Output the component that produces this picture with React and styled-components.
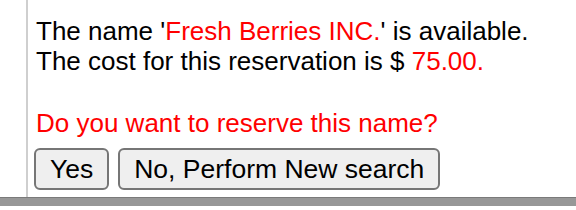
import styled, { createGlobalStyle } from "styled-components";

const Global = createGlobalStyle`
  html, body {
    margin: 0;
    padding: 0;
    background: #fff;
  }
  body {
    font-family: "Liberation Sans", Arial, sans-serif;
  }
`;

const Page = styled.div`
  width: 576px;
  height: 210px;
  display: flex;
  flex-direction: column;
  overflow: hidden;
`;

const Body = styled.div`
  height: 197px;
  display: flex;
`;

const Gutter = styled.div`
  width: 26px;
  flex-shrink: 0;
`;

const Panel = styled.div`
  flex: 1;
  border-left: 2px solid #cfcfcf;
  padding: 16px 0 0 8px;
`;

const Line = styled.div`
  font-size: 26px;
  line-height: 30px;
  color: #000;
`;

const Red = styled.span`
  color: #ff0000;
`;

const Question = styled.div`
  font-size: 26px;
  line-height: 30px;
  color: #ff0000;
  margin-top: 32px;
`;

const Buttons = styled.div`
  display: flex;
  gap: 9px;
  margin: 10px 0 0 -2px;
`;

const Button = styled.button`
  font-family: "Liberation Sans", Arial, sans-serif;
  font-size: 26.5px;
  height: 42px;
  padding: 0 14px;
  background: #efefef;
  border: 2px solid #767676;
  border-radius: 6px;
  color: #000;
`;

const Bar = styled.div`
  height: 8px;
  background: #979797;
  border-top: 1px solid #7a7a7a;
`;

export default function App() {
  return (
    <Page>
      <Global />
      <Body>
        <Gutter />
        <Panel>
          <Line>
            The name '<Red>Fresh Berries INC.</Red>' is available.
          </Line>
          <Line>
            The cost for this reservation is $ <Red>75.00.</Red>
          </Line>
          <Question>Do you want to reserve this name?</Question>
          <Buttons>
            <Button>Yes</Button>
            <Button>No, Perform New search</Button>
          </Buttons>
        </Panel>
      </Body>
      <Bar />
    </Page>
  );
}
